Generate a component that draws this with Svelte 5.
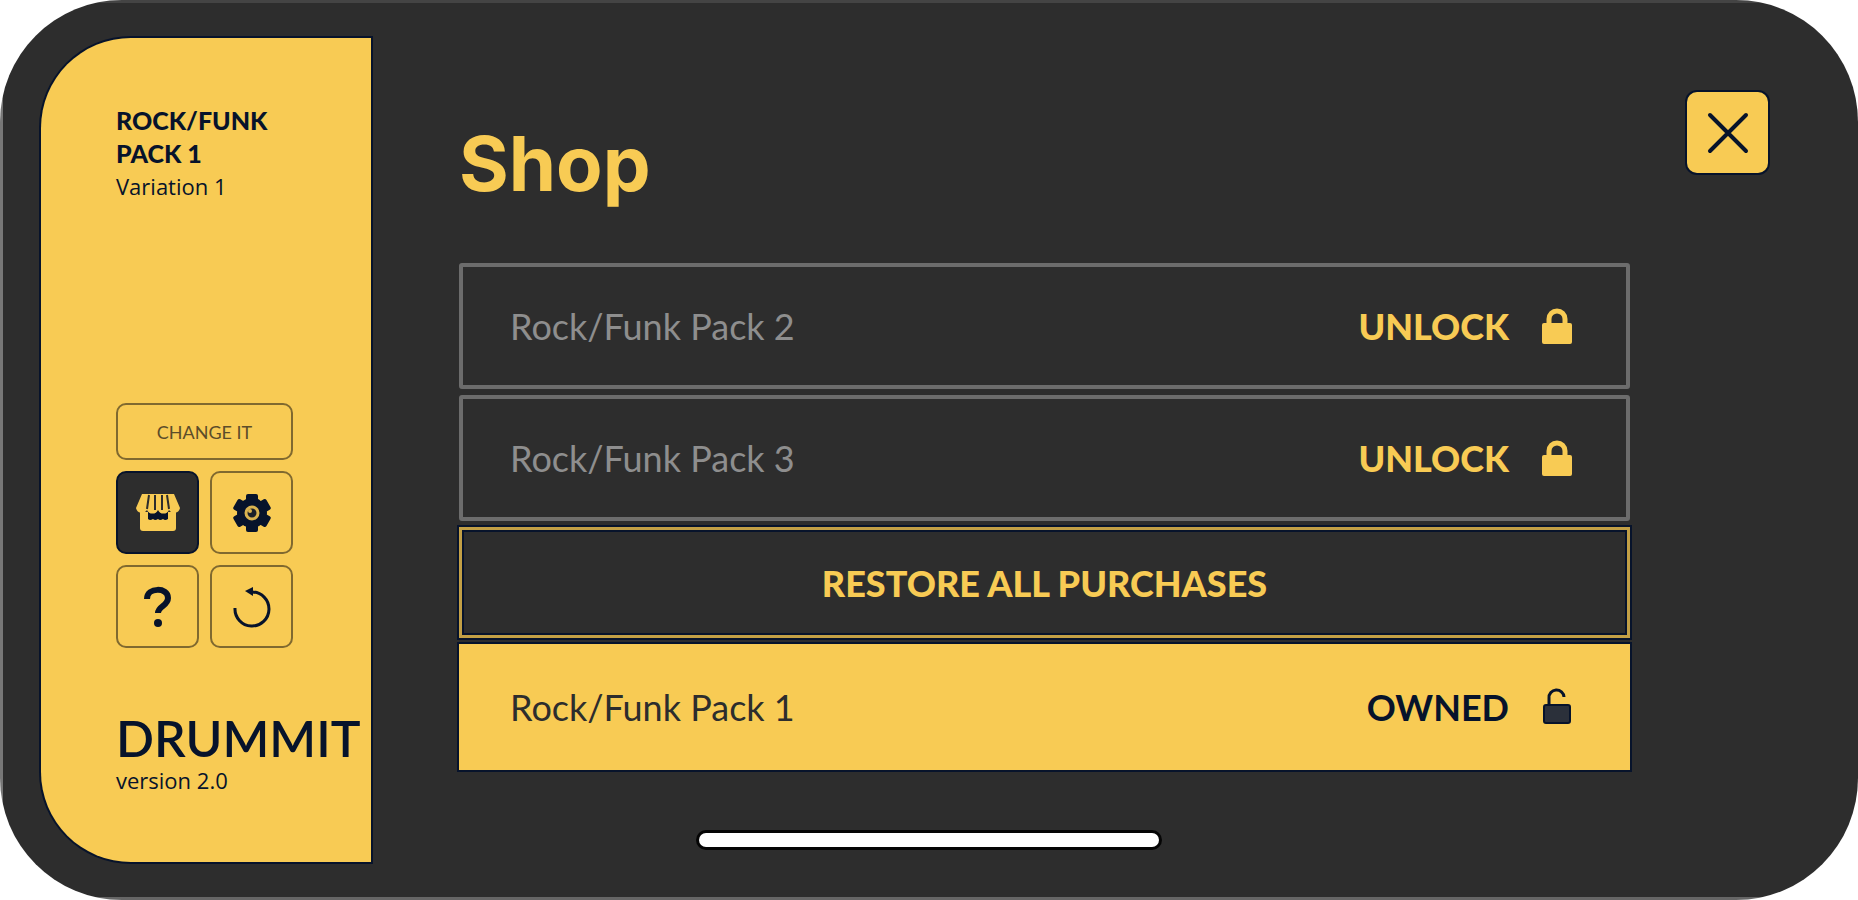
<script>
    let packs = [
        { name: 'Rock/Funk Pack 2', owned: false },
        { name: 'Rock/Funk Pack 3', owned: false },
    ];
    let ownedPacks = [
        { name: 'Rock/Funk Pack 1', owned: true },
    ];
</script>

<style>
    :global(body) {
        margin: 0;
        background: #fff;
    }

    .device {
        --yellow: #f8cb54;
        --dark: #2d2d2d;
        --ink: #07132b;

        position: relative;
        display: flex;
        box-sizing: border-box;
        min-height: 100vh;
        padding: 38px 90px 38px 41px;
        border-radius: 122px;
        background:
            linear-gradient(#444, #444) top / 100% 3px no-repeat,
            linear-gradient(#666, #666) bottom / 100% 3px no-repeat,
            linear-gradient(#777, #777) left / 3px 100% no-repeat,
            var(--dark);
        color: var(--yellow);
        font-family: Lato, "Liberation Sans", sans-serif;
    }

    button {
        margin: 0;
        padding: 0;
        border: none;
        background: none;
        color: inherit;
        font: inherit;
        cursor: pointer;
    }

    svg {
        display: block;
    }

    .sidebar {
        display: flex;
        flex-direction: column;
        box-sizing: border-box;
        flex: 0 0 330px;
        padding: 66px 0 70px 75px;
        border-radius: 90px 0 0 90px;
        background: var(--yellow);
        box-shadow: 0 0 0 2px var(--ink);
        color: var(--ink);
    }

    .current {
        margin: 0;
        font-size: 25px;
        font-weight: 900;
        line-height: 33px;
    }

    .small {
        margin: 0;
        font-family: "Open Sans", sans-serif;
        font-size: 22px;
        font-weight: 500;
        line-height: 33px;
    }

    .tools {
        display: grid;
        grid-template-columns: 83px 83px;
        gap: 11px;
        width: 177px;
        margin-top: auto;
    }

    .tool {
        display: flex;
        align-items: center;
        justify-content: center;
        box-sizing: border-box;
        height: 83px;
        border: 2px solid #80692f;
        border-radius: 10px;
    }

    .change {
        grid-column: 1 / 3;
        height: 57px;
        color: #5c4d2a;
        font-size: 18px;
    }

    .active {
        border-color: var(--ink);
        background: var(--dark);
        color: var(--yellow);
    }

    .brand {
        margin-top: 60px;
    }

    .logo {
        margin: 0;
        font-size: 50px;
        font-weight: 600;
        line-height: 60px;
    }

    .brand .small {
        line-height: 24px;
    }

    .shop {
        display: grid;
        grid-template-columns: 1fr 81px;
        grid-template-rows: auto 1fr;
        column-gap: 57px;
        flex: 1;
        margin-left: 88px;
        padding-top: 54px;
    }

    h1 {
        margin: 24px 0 0;
        font-family: Inter, sans-serif;
        font-size: 76px;
        font-weight: 700;
        line-height: 94px;
    }

    .close {
        display: flex;
        align-items: center;
        justify-content: center;
        height: 81px;
        border-radius: 10px;
        background: var(--yellow);
        box-shadow: 0 0 0 2px var(--ink);
        color: var(--ink);
    }

    .list {
        display: flex;
        flex-direction: column;
        gap: 6px;
        margin: 53px 0 0;
    }

    .row {
        display: flex;
        align-items: center;
        box-sizing: border-box;
        height: 126px;
        padding: 0 53px 0 47px;
        border: 4px solid #6c6c6c;
        border-radius: 3px;
        font-size: 36px;
    }

    .name {
        flex: 1;
        color: #8e8e8e;
    }

    .action {
        display: flex;
        align-items: center;
        gap: 32px;
        font-weight: 900;
    }

    .restore {
        justify-content: center;
        height: 111px;
        padding: 0;
        border: 3px solid #c29f45;
        border-radius: 0;
        box-shadow: 0 0 0 2px var(--ink), inset 0 0 0 2px var(--ink);
        font-weight: 900;
    }

    .owned {
        border-color: var(--yellow);
        border-radius: 0;
        background: var(--yellow);
        box-shadow: 0 0 0 2px var(--ink);
        color: var(--ink);
    }

    .owned .name {
        color: var(--dark);
    }

    .owned .action {
        font-weight: 700;
    }

    .home {
        position: absolute;
        bottom: 53px;
        left: 50%;
        width: 460px;
        height: 14px;
        border-radius: 7px;
        background: #fff;
        box-shadow: 0 0 0 3px #050505;
        transform: translateX(-50%);
    }
</style>

<div class="device">
    <aside class="sidebar">
        <p class="current">ROCK/FUNK<br>PACK 1</p>
        <p class="small">Variation 1</p>

        <div class="tools">
            <button class="tool change">CHANGE IT</button>
            <button class="tool active" aria-label="Shop">
                <svg width="46" height="40" viewBox="0 0 46 40">
                    <path d="M5 19h36v16a3 3 0 0 1-3 3H8a3 3 0 0 1-3-3z" fill="currentColor" />
                    <path d="M13 17h20v9q-3 2-5 0-3 2-5 0-3 2-5 0-3 2-5 0z" fill="#07132b" />
                    <path d="M7 1h32l6 14a6 6 0 0 1-11 2 6 6 0 0 1-11 0 6 6 0 0 1-11 0A6 6 0 0 1 1 15z" fill="currentColor" />
                    <path d="M14 2l-2 14M20 2v15M27 2v15M32 2l2 14" fill="none" stroke="#2d2d2d" stroke-width="2" />
                </svg>
            </button>
            <button class="tool" aria-label="Settings">
                <svg width="40" height="40" viewBox="0 0 40 40">
                    <g fill="currentColor">
                        <circle cx="20" cy="20" r="15" />
                        {#each [0, 60, 120] as angle}
                            <rect x="14" y="1" width="12" height="38" rx="2" transform="rotate({angle} 20 20)" />
                        {/each}
                    </g>
                    <circle cx="20" cy="20" r="6" fill="#1b2029" stroke="#d9b350" stroke-width="3" />
                    <circle cx="18" cy="18" r="2" fill="#d9b350" />
                </svg>
            </button>
            <button class="tool" aria-label="Help">
                <svg width="30" height="42" viewBox="0 0 30 42">
                    <path d="M4 13C4 1 25 1 25 12c0 8-10 8-10 15" fill="none" stroke="currentColor" stroke-width="6" />
                    <circle cx="15" cy="37" r="4" fill="currentColor" />
                </svg>
            </button>
            <button class="tool" aria-label="Reset">
                <svg width="40" height="42" viewBox="0 0 40 42">
                    <path d="M3 22A17 17 0 1 0 20 6" fill="none" stroke="currentColor" stroke-width="3" />
                    <path d="M13 5l8-4v9z" fill="currentColor" />
                </svg>
            </button>
        </div>

        <div class="brand">
            <p class="logo">DRUMMIT</p>
            <p class="small">version 2.0</p>
        </div>
    </aside>

    <main class="shop">
        <h1>Shop</h1>
        <button class="close" aria-label="Close">
            <svg width="42" height="42" viewBox="0 0 42 42" fill="none" stroke="currentColor" stroke-width="4" stroke-linecap="round">
                <path d="M3 3l36 36M39 3L3 39" />
            </svg>
        </button>

        <div class="list">
            {#each packs as pack}
                <div class="row">
                    <span class="name">{pack.name}</span>
                    <button class="action">
                        UNLOCK
                        <svg width="32" height="38" viewBox="0 0 32 38">
                            <path d="M8 17v-5a8 8 0 0 1 16 0v5" fill="none" stroke="currentColor" stroke-width="5" />
                            <rect x="1" y="16" width="30" height="21" rx="2" fill="currentColor" />
                        </svg>
                    </button>
                </div>
            {/each}

            <button class="row restore">RESTORE ALL PURCHASES</button>

            {#each ownedPacks as pack}
                <div class="row owned">
                    <span class="name">{pack.name}</span>
                    <span class="action">
                        OWNED
                        <svg width="32" height="38" viewBox="0 0 32 38">
                            <path d="M8 17v-7a7 7 0 0 1 15-1" fill="none" stroke="currentColor" stroke-width="3" />
                            <rect x="3" y="17" width="26" height="18" rx="2" fill="#2b303a" stroke="currentColor" stroke-width="2" />
                        </svg>
                    </span>
                </div>
            {/each}
        </div>
    </main>

    <div class="home"></div>
</div>
